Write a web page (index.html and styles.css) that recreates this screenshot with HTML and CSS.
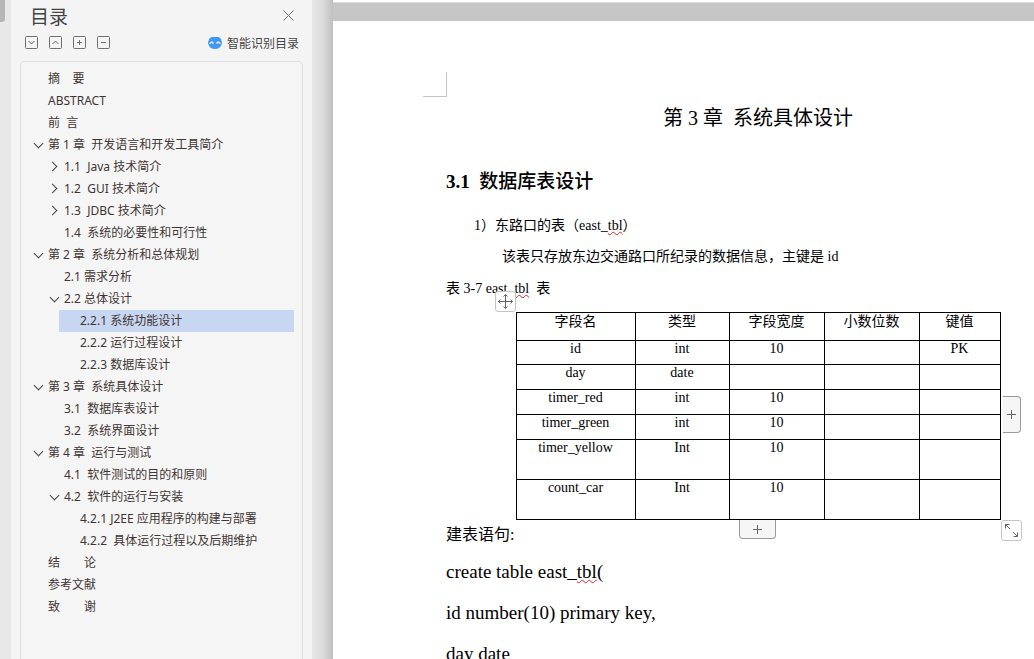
FILE: index.html
```
<!DOCTYPE html>
<html lang="zh-CN">

<head>
    <meta charset="UTF-8">
    <meta name="viewport" content="width=device-width, initial-scale=1.0">
    <title>系统具体设计</title>
    <link rel="stylesheet" href="styles.css">
</head>

<body>
    <div class="side-strip">
        <div class="side-thumb"></div>
    </div>

    <aside class="outline">
        <header class="outline-header">
            <h2 class="outline-title">目录</h2>
            <button type="button" class="icon-btn" aria-label="关闭">
                <svg width="11" height="11" viewBox="0 0 11 11"><path d="M.5 .5l10 10M10.5 .5l-10 10" /></svg>
            </button>
        </header>
        <div class="outline-tools">
            <button type="button" class="icon-btn" aria-label="展开">
                <svg width="13" height="13" viewBox="0 0 13 13"><rect x=".5" y=".5" width="12" height="12" rx="1" /><path d="M3.5 5l3 3 3-3" /></svg>
            </button>
            <button type="button" class="icon-btn" aria-label="收起">
                <svg width="13" height="13" viewBox="0 0 13 13"><rect x=".5" y=".5" width="12" height="12" rx="1" /><path d="M3.5 8l3-3 3 3" /></svg>
            </button>
            <button type="button" class="icon-btn" aria-label="增加级别">
                <svg width="13" height="13" viewBox="0 0 13 13"><rect x=".5" y=".5" width="12" height="12" rx="1" /><path d="M4 6.5h5M6.5 4v5" /></svg>
            </button>
            <button type="button" class="icon-btn" aria-label="减少级别">
                <svg width="13" height="13" viewBox="0 0 13 13"><rect x=".5" y=".5" width="12" height="12" rx="1" /><path d="M4 6.5h5" /></svg>
            </button>
            <button type="button" class="smart-btn">
                <svg width="14" height="12" viewBox="0 0 14 12">
                    <path d="M4 0h6q3 .5 3.500 4 1 2-.2 4Q12 12 7 12T.7 8q-1.200-2-.2-4Q1 .5 4 0z" fill="#4397f7" />
                    <path d="M1.500 6.500l2.500-1.500 1.500 1.500M8.500 6.500l1.500-1.500 2.500 1.500" fill="none" stroke="#fff" stroke-width="1.300" />
                </svg>
                智能识别目录
            </button>
        </div>

        <nav class="tree">
            <ul>
                <li><div class="row"><a href="#">摘    要</a></div></li>
                <li><div class="row"><a href="#">ABSTRACT</a></div></li>
                <li><div class="row"><a href="#">前  言</a></div></li>
                <li>
                    <div class="row"><button type="button" class="toggle open" aria-label="收起"></button><a href="#">第 1 章  开发语言和开发工具简介</a></div>
                    <ul>
                        <li><div class="row"><button type="button" class="toggle" aria-label="展开"></button><a href="#">1.1  Java 技术简介</a></div></li>
                        <li><div class="row"><button type="button" class="toggle" aria-label="展开"></button><a href="#">1.2  GUI 技术简介</a></div></li>
                        <li><div class="row"><button type="button" class="toggle" aria-label="展开"></button><a href="#">1.3  JDBC 技术简介</a></div></li>
                        <li><div class="row"><a href="#">1.4  系统的必要性和可行性</a></div></li>
                    </ul>
                </li>
                <li>
                    <div class="row"><button type="button" class="toggle open" aria-label="收起"></button><a href="#">第 2 章  系统分析和总体规划</a></div>
                    <ul>
                        <li><div class="row"><a href="#">2.1 需求分析</a></div></li>
                        <li>
                            <div class="row"><button type="button" class="toggle open" aria-label="收起"></button><a href="#">2.2 总体设计</a></div>
                            <ul>
                                <li><div class="row selected"><a href="#">2.2.1 系统功能设计</a></div></li>
                                <li><div class="row"><a href="#">2.2.2 运行过程设计</a></div></li>
                                <li><div class="row"><a href="#">2.2.3 数据库设计</a></div></li>
                            </ul>
                        </li>
                    </ul>
                </li>
                <li>
                    <div class="row"><button type="button" class="toggle open" aria-label="收起"></button><a href="#">第 3 章  系统具体设计</a></div>
                    <ul>
                        <li><div class="row"><a href="#">3.1  数据库表设计</a></div></li>
                        <li><div class="row"><a href="#">3.2  系统界面设计</a></div></li>
                    </ul>
                </li>
                <li>
                    <div class="row"><button type="button" class="toggle open" aria-label="收起"></button><a href="#">第 4 章  运行与测试</a></div>
                    <ul>
                        <li><div class="row"><a href="#">4.1  软件测试的目的和原则</a></div></li>
                        <li>
                            <div class="row"><button type="button" class="toggle open" aria-label="收起"></button><a href="#">4.2  软件的运行与安装</a></div>
                            <ul>
                                <li><div class="row"><a href="#">4.2.1 J2EE 应用程序的构建与部署</a></div></li>
                                <li><div class="row"><a href="#">4.2.2  具体运行过程以及后期维护</a></div></li>
                            </ul>
                        </li>
                    </ul>
                </li>
                <li><div class="row"><a href="#">结　　论</a></div></li>
                <li><div class="row"><a href="#">参考文献</a></div></li>
                <li><div class="row"><a href="#">致　　谢</a></div></li>
            </ul>
        </nav>
    </aside>

    <div class="gutter"></div>

    <main class="workspace">
        <div class="prev-page"></div>
        <article class="page">
            <div class="crop-mark"></div>
            <h1>第 3 章  系统具体设计</h1>
            <h2>3.1  <span class="hei">数据库表设计</span></h2>
            <p class="indent-1">1）东路口的表（east_<span class="typo">tbl</span>）</p>
            <p class="indent-2">该表只存放东边交通路口所纪录的数据信息，主键是 id</p>
            <p class="caption">表 3-7 east_<span class="typo">tbl</span>  表</p>

            <div class="table-wrap">
                <table>
                    <colgroup>
                        <col class="col-name">
                        <col class="col-type">
                        <col class="col-mid">
                        <col class="col-mid">
                        <col class="col-key">
                    </colgroup>
                    <thead>
                        <tr class="head"><th>字段名</th><th>类型</th><th>字段宽度</th><th>小数位数</th><th>键值</th></tr>
                    </thead>
                    <tbody>
                        <tr class="short"><td>id</td><td>int</td><td>10</td><td></td><td>PK</td></tr>
                        <tr><td>day</td><td>date</td><td></td><td></td><td></td></tr>
                        <tr><td>timer_red</td><td>int</td><td>10</td><td></td><td></td></tr>
                        <tr><td>timer_green</td><td>int</td><td>10</td><td></td><td></td></tr>
                        <tr class="tall"><td>timer_yellow</td><td>Int</td><td>10</td><td></td><td></td></tr>
                        <tr class="tall"><td>count_car</td><td>Int</td><td>10</td><td></td><td></td></tr>
                    </tbody>
                </table>
                <button type="button" class="handle move" aria-label="移动表格">
                    <svg width="15" height="15" viewBox="0 0 15 15"><path d="M7.500 .5v14M.5 7.500h14M5.500 2.500l2-2 2 2M5.500 12.500l2 2 2-2M2.500 5.500l-2 2 2 2M12.500 5.500l2 2-2 2" /></svg>
                </button>
                <button type="button" class="handle add-col" aria-label="添加列">
                    <svg width="9" height="9" viewBox="0 0 9 9"><path d="M4.500 0v9M0 4.500h9" /></svg>
                </button>
                <button type="button" class="handle add-row" aria-label="添加行">
                    <svg width="9" height="9" viewBox="0 0 9 9"><path d="M4.500 0v9M0 4.500h9" /></svg>
                </button>
                <button type="button" class="handle resize" aria-label="调整表格大小">
                    <svg width="13" height="13" viewBox="0 0 13 13"><path d="M.5 4.500v-4h4M.5 .5l4.500 4.500M12.500 8.500v4h-4M12.500 12.500l-4.500-4.500" /></svg>
                </button>
            </div>

            <p class="label">建表语句:</p>
            <div class="sql">
                <p>create table east_<span class="typo">tbl</span>(</p>
                <p>id number(10) primary key,</p>
                <p>day date</p>
            </div>
        </article>
    </main>
</body>

</html>
```
FILE: styles.css
```
* {
    box-sizing: border-box;
}

body {
    display: flex;
    height: 100vh;
    margin: 0;
    overflow: hidden;
    background-color: #e8e8e8;
    font-family: "Noto Sans", "Noto Sans CJK SC", sans-serif;
    font-size: 12px;
    color: #3f3533;
}

h1,
h2,
p,
ul {
    margin: 0;
    padding: 0;
    font-weight: normal;
}

button {
    padding: 0;
    border: none;
    background: none;
    font: inherit;
    color: inherit;
    cursor: pointer;
}

svg {
    display: block;
}

/* Left edge */
.side-strip {
    flex: 0 0 11px;
}

.side-thumb {
    width: 5px;
    height: 22px;
    border-radius: 0 0 3px 0;
    background-color: #b6b6b6;
}

/* Outline panel */
.outline {
    display: flex;
    flex-direction: column;
    flex: 0 0 301px;
    background-color: #f4f4f4;
}

.outline-header {
    display: flex;
    justify-content: space-between;
    align-items: center;
    height: 31px;
    padding: 0 18px 0 19px;
}

.outline-title {
    font-family: "Noto Sans CJK SC", sans-serif;
    font-size: 19px;
    line-height: 31px;
    color: #444;
}

.icon-btn svg {
    fill: none;
    stroke: #6e6e6e;
}

.outline-tools {
    display: flex;
    align-items: center;
    gap: 11px;
    height: 23px;
    padding: 0 13px 0 14px;
}

.smart-btn {
    display: flex;
    align-items: center;
    gap: 5px;
    margin-left: auto;
    color: #444;
}

.tree {
    flex: 1;
    margin: 7px 9px 0;
    padding: 6px 8px 0 6px;
    border: 1px solid #dedede;
    border-bottom: none;
    border-radius: 5px 5px 0 0;
    background-color: #f5f5f5;
}

.tree ul {
    list-style: none;
}

.tree ul ul {
    padding-left: 16px;
}

.row {
    display: flex;
    align-items: center;
    height: 22px;
    padding-left: 5px;
}

.row.selected {
    background-color: #c7d6f1;
}

.row a {
    color: inherit;
    line-height: 22px;
    text-decoration: none;
    white-space: pre;
}

.row a:first-child {
    margin-left: 16px;
}

.toggle {
    display: flex;
    align-items: center;
    width: 16px;
    height: 22px;
    padding: 0 0 2px 1px;
}

.toggle::before {
    content: "";
    width: 6px;
    height: 6px;
    border: solid #444;
    border-width: 1px 1px 0 0;
    transform: rotate(45deg);
}

.toggle.open {
    padding: 0 0 4px 3px;
}

.toggle.open::before {
    transform: rotate(135deg);
}

/* Shadow between the panel and the document */
.gutter {
    flex: 0 0 21px;
    background: linear-gradient(to right, #e8e8e8, #dcdcdc 50%, #c0c0c0);
}

/* Document */
.workspace {
    flex: 1;
    min-width: 0;
    overflow: hidden;
    background-color: #c6c6c6;
}

.prev-page {
    height: 3px;
    margin-bottom: 18px;
    border-bottom: 1px solid #ddd;
    background-color: #fff;
}

.page {
    position: relative;
    width: 850px;
    min-height: 100vh;
    padding: 77px 113px;
    background-color: #fff;
    font-family: "Liberation Serif", "Noto Sans CJK SC", serif;
    font-size: 14px;
    color: #000;
}

.crop-mark {
    position: absolute;
    top: 51px;
    left: 90px;
    width: 24px;
    height: 25px;
    border: solid #c4c4c4;
    border-width: 0 1px 1px 0;
}

.page h1 {
    font-size: 20px;
    line-height: 40px;
    text-align: center;
    white-space: pre;
}

.page h2 {
    margin: 28px 0 12px;
    font-size: 19px;
    font-weight: bold;
    line-height: 32px;
    white-space: pre;
}

.page .hei {
    font-weight: 500;
}

.page p {
    line-height: 31px;
    white-space: pre;
}

.page .indent-1 {
    padding-left: 28px;
}

.page .indent-2 {
    padding-left: 56px;
}

.page .caption {
    line-height: 33px;
}

.typo {
    text-decoration: underline wavy #e02020 1px;
    text-underline-offset: 1px;
}

/* Field table */
.table-wrap {
    position: relative;
    width: 485px;
    margin: 7px auto 0;
}

table {
    width: 100%;
    table-layout: fixed;
    border-collapse: collapse;
}

.col-name {
    width: 119px;
}

.col-type {
    width: 94px;
}

.col-mid {
    width: 95px;
}

.col-key {
    width: 81px;
}

th,
td {
    height: 25px;
    padding: 0;
    border: 1px solid #000;
    font-weight: normal;
    line-height: 15px;
    text-align: center;
    vertical-align: top;
}

.head th {
    height: 28px;
    line-height: 17px;
}

.short td {
    height: 24px;
}

.tall td {
    height: 40px;
}

.handle {
    position: absolute;
    display: flex;
    justify-content: center;
    align-items: center;
    border: 1px solid #c4c4c4;
    border-radius: 3px;
    background-color: #fff;
}

.handle svg {
    fill: none;
    stroke: #666;
}

.move {
    top: -21px;
    left: -21px;
    width: 21px;
    height: 21px;
}

.add-col {
    top: 84px;
    left: 100%;
    width: 18px;
    height: 37px;
    margin-left: 2px;
    border-color: #999;
    border-left: none;
    border-radius: 0 4px 4px 0;
    background-color: #f6f6f6;
}

.add-row {
    top: 100%;
    left: calc(50% - 19px);
    width: 37px;
    height: 19px;
    border-color: #999;
    border-top: none;
    border-radius: 0 0 4px 4px;
    background-color: #f6f6f6;
}

.resize {
    top: 100%;
    left: 100%;
    width: 21px;
    height: 21px;
}

/* SQL listing */
.page .label {
    font-size: 16px;
    line-height: 30px;
}

.sql {
    margin-top: 1px;
    font-size: 19px;
}

.page .sql p {
    line-height: 41px;
}
```
